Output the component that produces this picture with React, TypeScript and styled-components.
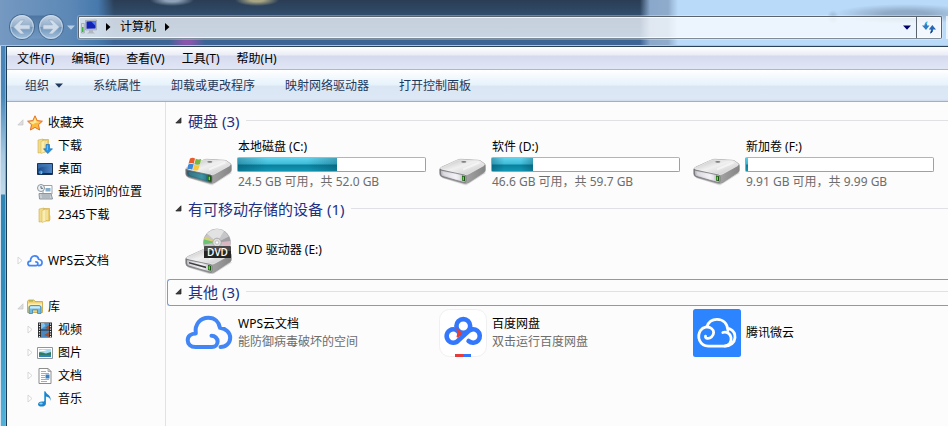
import React from "react";
import styled, { createGlobalStyle, css } from "styled-components";

const GlobalStyle = createGlobalStyle`
  * { box-sizing: border-box; }
  html, body { margin: 0; padding: 0; }
  body, button {
    font-family: "Noto Sans", "Noto Sans CJK SC", sans-serif;
    font-size: 12px;
    line-height: 18px;
    color: #000;
  }
  button { background: none; border: 0; padding: 0; margin: 0; white-space: nowrap; }
  svg { display: block; flex: none; }
  ul { list-style: none; margin: 0; padding: 0; }
`;

const Shell = styled.div`
  display: flex;
  flex-direction: column;
  min-height: 100vh;
  overflow: hidden;
`;

const GlassHeader = styled.header`
  display: flex;
  align-items: center;
  gap: 3px;
  height: 46px;
  padding: 9px 0 0 9px;
  border-bottom: 1px solid #a9c6e0;
  background:
    radial-gradient(ellipse 18px 8px at 187px 42px, #8a55ad 20%, transparent),
    radial-gradient(ellipse 22px 6px at 172px 0, #8fa3b8 30%, transparent),
    radial-gradient(ellipse 22px 6px at 257px 0, #a8a583 30%, transparent),
    radial-gradient(ellipse 6px 7px at 833px 17px, #9ab6d3 10%, transparent),
    radial-gradient(ellipse 72px 10px at 906px 14px, #8faac6 30%, transparent),
    linear-gradient(90deg, transparent 640px, #8aa8cb 650px, #8fabcc 668px, #badafa 678px),
    linear-gradient(90deg, #7599c1, #5c88b6 70px, #4679ad 98px, transparent 114px),
    linear-gradient(#2a3d55, #304a67 12px, #30527d 18px, #386497 38px, #3e6595);
`;

const NavPair = styled.div`
  display: flex;
  gap: 3px;
  border-radius: 13px;
  background: linear-gradient(transparent 1px, rgba(60, 100, 145, 0.6) 2px, rgba(120, 160, 200, 0.5) 24px, transparent 25px);
`;

const RoundButton = styled.button`
  width: 26px;
  height: 26px;
`;

const RecentButton = styled.button`
  width: 8px;
  display: flex;
`;

const AddressBar = styled.div`
  flex: 1;
  display: flex;
  height: 23px;
  border: 1px solid #59646f;
  border-bottom-color: #7e8b98;
  border-radius: 2px;
  background: rgba(255, 255, 255, 0.73);
  box-shadow: inset 0 0 0 1px rgba(255, 255, 255, 0.75), 0 0 0 1px rgba(255, 255, 255, 0.3);
`;

const Crumbs = styled.nav`
  flex: 1;
  display: flex;
  align-items: center;
  padding: 0 5px 0 2px;
  gap: 9px;
`;

const Spacer = styled.span`
  flex: 1;
`;

const RefreshButton = styled.button`
  width: 25px;
  display: flex;
  align-items: center;
  justify-content: center;
  border-left: 1px solid #59646f;
  background: rgba(255, 255, 255, 0.3);
`;

const SearchEdge = styled.div`
  width: 2px;
  height: 23px;
  margin-left: 1px;
  background: rgba(255, 255, 255, 0.7);
`;

const Frame = styled.div`
  flex: 1;
  display: flex;
`;

const GlassEdge = styled.div`
  width: 6px;
  border-left: 1px solid #d3e3f1;
  border-right: 1px solid #6db6d8;
  background: linear-gradient(#4a83b8, #4888bb 50px, #a8cbe2 110px, #c0daea 148px, #2e86b5 149px, #2f8dbd 240px, #52b3da);
`;

const Content = styled.div`
  flex: 1;
  min-width: 0;
  display: flex;
  flex-direction: column;
  border-left: 1px solid #1d3c58;
  border-top: 1px solid #2a4057;
  background: #fcfcfc;
`;

const MenuBar = styled.nav`
  display: flex;
  gap: 17px;
  height: 23px;
  padding: 1px 10px 0;
  border-bottom: 1px solid #b1b6cc;
  background: linear-gradient(#fff, #e9ecf5 8px, #d5daee 9px, #e1e6f6);
`;

const Toolbar = styled.div`
  display: flex;
  align-items: center;
  gap: 30px;
  height: 32px;
  padding: 0 18px;
  border-bottom: 1px solid #a0afc3;
  background: linear-gradient(#fff, #e6f2fb 15px, #dbe6f4 16px, #dde8f6 29px, #c9d9ec);
`;

const ToolButton = styled.button`
  display: flex;
  align-items: center;
  gap: 6px;
  color: #1e395b;
`;

const Panes = styled.div`
  flex: 1;
  display: flex;
`;

const Sidebar = styled.aside`
  flex: none;
  width: 159px;
  padding-top: 9px;
  border-right: 1px solid #d6e5f5;
`;

const TreeSection = styled.ul`
  margin-bottom: 23px;
`;

const TreeItem = styled.button<{ $nested?: boolean }>`
  display: flex;
  align-items: center;
  width: 100%;
  height: 23px;
  padding-left: ${(p) => (p.$nested ? 20 : 10)}px;
`;

const Twisty = styled.span`
  width: 10px;
`;

const TreeLabel = styled.span`
  margin-left: 5px;
`;

const Main = styled.main`
  flex: 1;
  min-width: 0;
  padding: 6px 0 0 1px;
`;

const GroupTitle = styled.h2<{ $focused?: boolean }>`
  display: flex;
  align-items: center;
  height: 27px;
  margin: 0;
  padding-bottom: 2px;
  font-weight: 400;
  border: 1px solid transparent;
  border-right: 0;
  border-radius: 3px 0 0 3px;
  ${(p) => p.$focused && css`border-color: #7d9dc8;`}
  &::after {
    content: "";
    flex: 1;
    height: 1px;
    margin-left: 7px;
    background: #e0e1e4;
  }
`;

const GroupToggle = styled.button`
  display: flex;
  align-items: center;
  gap: 6px;
  padding-left: 7px;
  color: #1e3287;
  font-size: 15px;
  line-height: 22px;
`;

const Tiles = styled.ul`
  display: grid;
  grid-template-columns: repeat(auto-fill, 254px);
  padding: 3px 0 5px 18px;
`;

const Tile = styled.li`
  display: flex;
  align-items: center;
  gap: 5px;
  min-height: 48px;
`;

const TileText = styled.div`
  width: 188px;
`;

const TileName = styled.div<{ $tight?: boolean }>`
  line-height: ${(p) => (p.$tight ? 17 : 18)}px;
`;

const TileNote = styled.div`
  color: #6d6d6d;
`;

const Meter = styled.div`
  height: 15px;
  margin: 2px 0 1px -1px;
  padding: 0;
  border: 1px solid #a0a0a0;
  border-top-color: #b4b4b4;
  border-radius: 2px;
  background: #fff;
`;

const MeterFill = styled.div`
  height: 13px;
  background:
    linear-gradient(90deg, rgba(0, 50, 70, 0.3), transparent 30%, transparent 70%, rgba(0, 50, 70, 0.3)),
    linear-gradient(#63d3ec, #3cbcd9 6px, #0b7f9c 7px, #1198b4);
`;

type Part = { x?: number };

const RoundArrow = ({ flip }: { flip?: boolean }) => (
  <svg width="26" height="26" viewBox="0 0 26 26">
    <defs>
      <linearGradient id={flip ? "ra2" : "ra1"} x1="0" y1="0" x2="0" y2="1">
        <stop offset="0" stopColor="#c3d3e4" />
        <stop offset=".48" stopColor="#93aeca" />
        <stop offset=".52" stopColor="#6f94ba" />
        <stop offset="1" stopColor="#a5c3df" />
      </linearGradient>
    </defs>
    <circle cx="13" cy="13" r="12.5" fill="none" stroke="#45688d" />
    <circle cx="13" cy="13" r="12" fill={`url(#${flip ? "ra2" : "ra1"})`} />
    <circle cx="13" cy="13" r="11.300" fill="none" stroke="#d4e1ee" strokeOpacity=".7" />
    <path
      transform={flip ? "translate(26 0) scale(-1 1)" : undefined}
      d="M4.500 13 11.500 6h4L11.500 10.800H21v4.400h-9.500l4 4.800h-4z"
      fill="#d0dce9"
      stroke="#8ba6c3"
      strokeWidth=".6"
    />
  </svg>
);

const Computer = () => (
  <svg width="16" height="16" viewBox="0 0 16 16">
    <path d="M.5 4.500h2.800v9.500H.5z" fill="#d4d8dc" stroke="#8c949c" strokeWidth=".6" />
    <path d="M1 8h1.500v5H1z" fill="#3db53b" />
    <path d="M4.500 1.500 15.500 1v9.800l-11 .2z" fill="#c9cdd6" stroke="#8d93a0" strokeWidth=".6" />
    <path d="M5.500 2.400 14.600 2v7.500l-9.100.3z" fill="#1021b8" />
    <path d="m10 2.200 4.600-.2v5z" fill="#597af0" />
    <path d="M8 11h4v2l2 1.500H6L8 13z" fill="#b2b6bd" />
  </svg>
);

const CrumbArrow = () => (
  <svg width="5" height="8" viewBox="0 0 5 8"><path d="M0 0 4.500 4 0 8z" fill="#000" /></svg>
);

const DownArrow = ({ color }: { color: string }) => (
  <svg width="8" height="5" viewBox="0 0 8 5"><path d="M0 .5h8L4 4.700z" fill={color} /></svg>
);

const RefreshIcon = () => (
  <svg width="14" height="13" viewBox="0 0 14 13">
    <path d="M5.500.5C3.500 1 2.500 2.500 2.500 4.500H0L4 9l3.500-4.500H5.200C5 2.800 5 1.500 5.500.5z" fill="#2f7cc4" />
    <path d="M5.500.5C4 1 3.400 2 3.200 3.500L5 3c0-1 .1-1.700.5-2.500z" fill="#3cc0e0" />
    <path d="M8 12.500c2-.5 3.200-2 3.200-4H14L10.300 4 6.800 8.500h2C9 10.200 8.700 11.500 8 12.500z" fill="#2a67b3" />
    <path d="M8 12.500c1.500-.4 2.200-1.300 2.500-2.500H8.900c-.2 1-.5 1.900-.9 2.500z" fill="#173b78" />
  </svg>
);

const OpenMark = ({ pale }: { pale?: boolean }) => (
  <svg width="7" height="7" viewBox="0 0 7 7">
    <path d="M6 .8V6H.8z" fill={pale ? "#dedede" : "#3f3f3f"} stroke={pale ? "#c6c6c6" : "#1c1c1c"} strokeWidth=".7" />
  </svg>
);

const ClosedMark = () => (
  <svg width="7" height="9" viewBox="0 0 7 9">
    <path d="M1 1v7l4-3.500z" fill="#fff" stroke="#d4d4d4" strokeWidth=".9" />
  </svg>
);

const Star = () => (
  <svg width="16" height="16" viewBox="0 0 16 16">
    <path d="m8 .8 2.200 4.800 5.200.6-3.900 3.500 1.100 5.300L8 12.400 3.400 15l1.100-5.300L.6 6.200l5.200-.6z" fill="#fdb93a" stroke="#e2702a" strokeLinejoin="round" />
    <path d="M8 2.800 6.500 6.500l-4 .5L6 9.500 8 8l5-1-3.500-.6z" fill="#ffe999" />
  </svg>
);

const FolderBody = ({ x = 2 }: Part) => (
  <g transform={`translate(${x} 0)`}>
    <path d="M0 2 5 1v13.500L0 15z" fill="#f2dc8a" stroke="#cdac50" strokeWidth=".6" />
    <path d="M5 1.500h5.500V14H5z" fill="#e9cb69" stroke="#c9a648" strokeWidth=".6" />
    <path d="m3 3.500 4-1.500v12l-4 1.500z" fill="#faedb0" stroke="#d3b456" strokeWidth=".5" />
    <path d="M7.500 3h1v10h-1z" fill="#fff6cf" />
    <path d="M10.500 8.500h.8V13h-.8z" fill="#d9b65a" />
  </g>
);

const Folder = () => <svg width="16" height="16" viewBox="0 0 16 16"><FolderBody /></svg>;

const Downloads = () => (
  <svg width="16" height="16" viewBox="0 0 16 16">
    <FolderBody x={1} />
    <path d="M9 6.500h3.500v4.300h3L10.800 15.600 6.500 10.800H9z" fill="#2591e3" stroke="#1767b0" strokeWidth=".6" />
    <path d="M9.800 7.200h.9v5h-.9z" fill="#83cbf8" />
  </svg>
);

const Desktop = () => (
  <svg width="16" height="16" viewBox="0 0 16 16">
    <defs><linearGradient id="desk"><stop stopColor="#174581" /><stop offset="1" stopColor="#5088cb" /></linearGradient></defs>
    <path d="M.5 2.500h15v11H.5z" fill="url(#desk)" stroke="#1b3156" />
    <path d="M1 2.800 15 3v4C11 5 6 5 1 8z" fill="#477dba" fillOpacity=".6" />
    <path d="M1 12h14v1.300H1z" fill="#172d50" />
    <circle cx="3.800" cy="11.300" r="1.900" fill="#3295dd" />
    <path d="M2.800 10.300h1v1h-1z" fill="#ee6d37" /><path d="M4 11.400h1v1H4z" fill="#ffd744" /><path d="M4 10.200h1v1H4z" fill="#7fcc46" />
  </svg>
);

const Recent = () => (
  <svg width="16" height="16" viewBox="0 0 16 16">
    <path d="M6 1.500h9v8.500H6z" fill="#fff" stroke="#9ba1a7" />
    <path d="M8.500 4h5v3.500h-5z" fill="#85aeca" />
    <path d="M2 9.500h12l1.500 5.500H2.500z" fill="#c9d0d6" stroke="#8d969e" />
    <path d="M4.500 11h9M5 13h8" stroke="#9aa4ac" />
    <circle cx="4" cy="4" r="3.500" fill="#edf2f5" stroke="#8c969e" />
    <path d="M4 2v2.300h2" fill="none" stroke="#4d5963" strokeWidth=".9" />
  </svg>
);

const WPS_PATH =
  "M26.500 26.700C30 26.700 32.600 29.500 32.600 32.500C32.600 35.700 30 38 27 38H10.500C5.500 38 2.700 34.800 2.700 31.300C2.700 27 6 24.500 10.800 24.400C9.500 15 15.500 8.800 23.300 8.800C30 8.800 34 13 35 18.800C41 19.500 45.200 23.500 45.200 28.800C45.200 34 41 38 35.500 38";

const WpsCloud = ({ size = 48, stroke = 4 }: { size?: number; stroke?: number }) => (
  <svg width={size} height={size} viewBox="0 0 48 48">
    <path d={WPS_PATH} fill="none" stroke="#4285f4" strokeWidth={stroke} strokeLinecap="round" strokeLinejoin="round" />
  </svg>
);

const Library = () => (
  <svg width="16" height="16" viewBox="0 0 16 16">
    <path d="M.5 2.500 1.500 1H7l1 1.500h7.500v11H.5z" fill="#f0d278" stroke="#c7a242" strokeWidth=".8" />
    <path d="M1 4.500h14v3H1z" fill="#fcf0b5" />
    <path d="M2 1.600h4v.8H2z" fill="#69ae49" />
    <path d="M2 14.500V8.500Q2 6.500 4 6.500h8q2 0 2 2v6h-3.500v-3.700h-5v3.700z" fill="#71bae0" stroke="#3b88b8" strokeWidth=".8" />
    <path d="M3 8q0-.8 1-.8h8q1 0 1 .8v1.500H3z" fill="#cbeaf7" />
  </svg>
);

const Video = () => (
  <svg width="16" height="16" viewBox="0 0 16 16">
    <path d="M1 .5h14v15H1z" fill="#27292c" />
    <path d="M4 1h8v6.500H4z" fill="#4a91cc" /><path d="M4 8.500h8V15H4z" fill="#4788c2" />
    <path d="M4 1h3l1.500 3L7 5 4 7z" fill="#7fc3ed" /><path d="m12 3-4 3 4 1.500zM12 10l-5 3 5 2z" fill="#9e5230" />
    <path d="M2.500 1.500v14M13.500 1.500v14" stroke="#f0f0f0" strokeWidth="1.200" strokeDasharray="1.300 1.200" />
  </svg>
);

const Picture = () => (
  <svg width="16" height="16" viewBox="0 0 16 16">
    <path d="M.5 2.500h15v11H.5z" fill="#fff" stroke="#8f979d" />
    <path d="M2 4h12v8H2z" fill="#a7dcf4" />
    <path d="M2 7.500c3-1 5 .8 7 1l5-1.500v3H2z" fill="#2f7b53" />
    <path d="M2 9.800h12V12H2z" fill="#2c83bb" /><path d="M2 5.500c3-1 6-1 8 0-3 .6-5 .6-8 1z" fill="#fff" />
  </svg>
);

const Doc = () => (
  <svg width="16" height="16" viewBox="0 0 16 16">
    <path d="M2 .5h9l3 3v12H2z" fill="#fff" stroke="#8d8d8d" />
    <path d="M11 .5v3h3z" fill="#dedede" stroke="#8d8d8d" strokeWidth=".7" />
    <path d="M4 3.500h5M4 5.500h8M4 7.500h4M4 9.500h4M4 11.500h8M4 13.500h6" stroke="#8796c5" strokeWidth=".8" />
    <path d="M8.500 6.500h4v4h-4z" fill="#3e7fc0" />
  </svg>
);

const Music = () => (
  <svg width="16" height="16" viewBox="0 0 16 16">
    <path d="M7 .5h1.600c.5 3 5.800 3.300 5 9.500-.5-2.800-2-4-4.700-4.400v7.100c0 1.700-2 2.900-4.300 2.900C2.500 15.600 1 14.700 1 13.200c0-1.900 2.300-3.200 6-2.600z" fill="#1d83cb" />
    <ellipse cx="4" cy="12.500" rx="1.800" ry="1" fill="#85d0f7" /><path d="M7.500 1v9" stroke="#69bbec" strokeWidth=".7" />
  </svg>
);

const WinFlag = () => (
  <g transform="translate(2.500 16.500)">
    <path d="M2.500 1c2-1.200 3.500-.9 5 0L6.300 6.200C4.800 5.300 3 5.300 1 6.200z" fill="#e65c2c" />
    <path d="M8.200 1.300c1.800.9 3.600.9 5.500.2l-1.400 5.200c-2 .7-3.600.6-5.300-.3z" fill="#78b83c" />
    <path d="M.8 7c2-1 3.500-.9 5.200 0l-1.300 5.200c-1.700-.8-3.200-.8-5.200.2z" fill="#3d87d5" />
    <path d="M6.700 7.300c1.800.9 3.500 1 5.400.3l-1.400 5c-2 .8-3.600.6-5.300-.2z" fill="#fac83a" />
  </g>
);

const DriveShape = ({ id, teal, slot }: { id: string; teal?: boolean; slot?: boolean }) => (
  <g>
    <defs>
      <linearGradient id={`${id}t`} x1="0" y1="0" x2="1" y2="1">
        <stop offset="0" stopColor="#b9b9b9" /><stop offset=".45" stopColor="#f0f0f0" /><stop offset="1" stopColor="#c4c4c4" />
      </linearGradient>
      <linearGradient id={`${id}f`}>
        <stop offset="0" stopColor={teal ? "#285d72" : "#c0c0c8"} /><stop offset=".6" stopColor={teal ? "#2f8b9c" : "#eeeef4"} /><stop offset="1" stopColor={teal ? "#1a5060" : "#b3b3bb"} />
      </linearGradient>
      <linearGradient id={`${id}s`}>
        <stop offset="0" stopColor="#6e6e6e" /><stop offset=".25" stopColor="#b9b9b9" /><stop offset="1" stopColor="#858585" />
      </linearGradient>
    </defs>
    <path d="M3 37 27 44.500 47 32 44 30z" fill="#000" fillOpacity=".13" />
    <path d="M.7 28.500Q.8 27 3 26L18.500 19Q20 18.300 22 18.300L39 19.300Q41 19.400 42 20.200L45.500 22.800Q46.300 23.500 46.300 25V29Q46.300 30.500 45 31.500L30 41.300Q27.500 43 24.500 42.200L3.500 36.300Q1 35.500.8 33z" fill={`url(#${id}s)`} stroke="#8c8c8c" strokeWidth=".7" />
    <path d="M2 26.800 19 19Q20 18.600 22 18.700L39 19.600Q41 19.800 42 20.600L45 23Q46 24 44.500 24.800L29.500 33Q27.500 34 25 33.500L3 28.500Q.8 27.800 2 26.800z" fill={`url(#${id}t)`} stroke="#f5f5f5" strokeWidth=".6" />
    <path d="M1.500 29 25.500 34Q27 34.400 27 36V40Q27 42 25 41.500L4 35.600Q1.800 35 1.700 33z" fill={`url(#${id}f)`} stroke="#6d6d72" strokeWidth=".7" />
    <path d="M4 30.800 21 34.600v4.300L5.500 34.600Q4.200 34 4 32.500z" fill="#fff" fillOpacity={teal ? ".08" : ".3"} />
    {slot && <path d="M4 31.500 21 36v1.800L4 33z" fill="#3e3e3e" />}
    <path d="M23 34.600 26 35.200V40.300L23 39.500z" fill="#1c5114" />
    <path d="M23.600 35.400 25 35.700V39.300L23.600 38.900z" fill="#53e62b" />
    <ellipse cx="24.800" cy="20.800" rx="2.600" ry=".9" fill="#7b7b7b" />
    <path d="M24 28.500 40.500 21.500" stroke="#fff" strokeWidth="2" strokeOpacity=".5" />
  </g>
);

const Drive = ({ id, system }: { id: string; system?: boolean }) => (
  <svg width="48" height="48" viewBox="0 0 48 48">
    <DriveShape id={id} teal={system} />
    {system && <WinFlag />}
  </svg>
);

const DvdLabel = styled.text`
  font: 600 10px "Open Sans", "Noto Sans", sans-serif;
  fill: #fff;
`;

const DvdDrive = () => (
  <svg width="48" height="48" viewBox="0 0 48 48">
    <g transform="translate(0 4.500)"><DriveShape id="dvd" slot /></g>
    <circle cx="32" cy="16.500" r="13.500" fill="#c6c6c8" stroke="#a4a4a6" strokeWidth=".7" />
    <path d="M32 16.500 22 7.500A13.500 13.500 0 0 1 39 5z" fill="#e2e2e2" />
    <path d="M32 16.500 19 13.500a13.500 13.500 0 0 1 1.500-3z" fill="#d9d06c" />
    <path d="M32 16.500 18.700 18.500a13.500 13.500 0 0 1 .3-5z" fill="#6cc472" />
    <path d="m32 16.500 13.300-1.500a13.500 13.500 0 0 1-.5 5.500z" fill="#ddb6c4" />
    <path d="m32 16.500 12-6a13.500 13.500 0 0 1 1.300 4.500z" fill="#9f9fa4" />
    <circle cx="32" cy="16.500" r="4.300" fill="#dcdcdc" stroke="#a0a0a0" strokeWidth=".8" />
    <circle cx="32" cy="16.500" r="1.700" fill="#fff" stroke="#999" strokeWidth=".5" />
    <path d="M19 21.500q0-1.500 1.500-1.500h24q1.500 0 1.500 1.500V32H19z" fill="#242424" />
    <path d="M19 21.500q0-1.500 1.500-1.500h24q1.500 0 1.500 1.500V25H19z" fill="#4a4a4a" />
    <DvdLabel x="32.500" y="29.500" textAnchor="middle">DVD</DvdLabel>
  </svg>
);

const BaiduDisk = () => (
  <svg width="48" height="48" viewBox="0 0 48 48">
    <rect x=".5" y=".5" width="47" height="47" rx="10" fill="#fff" stroke="#f0f0f0" />
    <g fill="none" stroke="#3277fc" strokeWidth="4.600">
      <circle cx="24.300" cy="17" r="6.900" />
      <path d="M20.500 24.300A6.700 6.700 0 1 0 19.500 31.300L28.800 22.900A6.700 6.700 0 1 1 29.600 32" strokeLinecap="round" strokeLinejoin="round" />
    </g>
    <path d="m17.500 18.500 4 3.500 2.200 2.300-4.700 4.500-1.500-.8q1.700-4 0-7.500z" fill="#e0423d" />
    <path d="M16 45h8v3h-8z" fill="#e43d3c" /><path d="M24 45h8v3h-8z" fill="#3277fc" />
  </svg>
);

const Weiyun = () => (
  <svg width="48" height="48" viewBox="0 0 48 48">
    <rect width="48" height="48" rx="2.500" fill="#2c85ff" />
    <g fill="none" stroke="#fff" strokeWidth="2.800" strokeLinecap="round">
      <path d="M12.500 27.200C12 29.700 16 30.200 18.500 28C21.500 25.300 21.200 21.500 18.500 19.500C15 16.800 10 18 7.500 21.500C3.500 27.500 6.500 37 15.500 37.200H31C36.500 37 38.800 32.800 38 28.500C37.300 24.500 33.500 22.300 29.800 23.500" />
      <path d="M14 17.500C15.500 13 19.500 10.300 24 10.300C30.500 10.300 34.500 15 35 21.500" />
      <path d="M36.500 19.800C40.200 21.500 42.300 24.800 42 28.700C41.700 33.500 37.500 37.200 32 37.200" />
    </g>
  </svg>
);

type Node = { label: string; icon: React.ReactNode; open?: boolean; closed?: boolean; children?: Node[] };

const tree: Node[] = [
  {
    label: "收藏夹", icon: <Star />, open: true,
    children: [
      { label: "下载", icon: <Downloads /> },
      { label: "桌面", icon: <Desktop /> },
      { label: "最近访问的位置", icon: <Recent /> },
      { label: "2345下载", icon: <Folder /> },
    ],
  },
  { label: "WPS云文档", icon: <WpsCloud size={16} stroke={5} />, closed: true },
  {
    label: "库", icon: <Library />, open: true,
    children: [
      { label: "视频", icon: <Video />, closed: true },
      { label: "图片", icon: <Picture />, closed: true },
      { label: "文档", icon: <Doc />, closed: true },
      { label: "音乐", icon: <Music />, closed: true },
    ],
  },
];

const TreeRow = ({ node, nested }: { node: Node; nested?: boolean }) => (
  <li>
    <TreeItem $nested={nested}>
      <Twisty>{node.open ? <OpenMark pale /> : node.closed ? <ClosedMark /> : null}</Twisty>
      {node.icon}
      <TreeLabel>{node.label}</TreeLabel>
    </TreeItem>
  </li>
);

const disks = [
  { name: "本地磁盘 (C:)", note: "24.5 GB 可用，共 52.0 GB", used: 53, system: true },
  { name: "软件 (D:)", note: "46.6 GB 可用，共 59.7 GB", used: 22 },
  { name: "新加卷 (F:)", note: "9.91 GB 可用，共 9.99 GB", used: 1 },
];

const others = [
  { name: "WPS云文档", note: "能防御病毒破坏的空间", icon: <WpsCloud /> },
  { name: "百度网盘", note: "双击运行百度网盘", icon: <BaiduDisk /> },
  { name: "腾讯微云", icon: <Weiyun /> },
];

const Group = ({ title, focused, children }: { title: string; focused?: boolean; children: React.ReactNode }) => (
  <section>
    <GroupTitle $focused={focused}>
      <GroupToggle aria-expanded="true"><OpenMark />{title}</GroupToggle>
    </GroupTitle>
    <Tiles>{children}</Tiles>
  </section>
);

export default function App() {
  return (
    <Shell>
      <GlobalStyle />
      <GlassHeader>
        <NavPair>
          <RoundButton aria-label="后退"><RoundArrow /></RoundButton>
          <RoundButton aria-label="前进"><RoundArrow flip /></RoundButton>
        </NavPair>
        <RecentButton aria-label="最近的页面"><DownArrow color="#b5cde4" /></RecentButton>
        <AddressBar>
          <Crumbs>
            <Computer />
            <CrumbArrow />
            <button>计算机</button>
            <CrumbArrow />
            <Spacer />
            <button aria-label="以前的位置"><DownArrow color="#00006b" /></button>
          </Crumbs>
          <RefreshButton aria-label="刷新"><RefreshIcon /></RefreshButton>
        </AddressBar>
        <SearchEdge />
      </GlassHeader>
      <Frame>
        <GlassEdge />
        <Content>
          <MenuBar>
            {["文件(F)", "编辑(E)", "查看(V)", "工具(T)", "帮助(H)"].map((m) => <button key={m}>{m}</button>)}
          </MenuBar>
          <Toolbar>
            <ToolButton>组织<DownArrow color="#1e395b" /></ToolButton>
            {["系统属性", "卸载或更改程序", "映射网络驱动器", "打开控制面板"].map((t) => <ToolButton key={t}>{t}</ToolButton>)}
          </Toolbar>
          <Panes>
            <Sidebar>
              {tree.map((n) => (
                <TreeSection key={n.label}>
                  <TreeRow node={n} />
                  {n.children?.map((c) => <TreeRow key={c.label} node={c} nested />)}
                </TreeSection>
              ))}
            </Sidebar>
            <Main>
              <Group title="硬盘 (3)">
                {disks.map((d, i) => (
                  <Tile key={d.name}>
                    <Drive id={`d${i}`} system={d.system} />
                    <TileText>
                      <TileName $tight>{d.name}</TileName>
                      <Meter role="meter" aria-label={d.name} aria-valuemin={0} aria-valuemax={100} aria-valuenow={d.used}>
                        <MeterFill style={{ width: `${d.used}%` }} />
                      </Meter>
                      <TileNote>{d.note}</TileNote>
                    </TileText>
                  </Tile>
                ))}
              </Group>
              <Group title="有可移动存储的设备 (1)">
                <Tile>
                  <DvdDrive />
                  <TileText><TileName>DVD 驱动器 (E:)</TileName></TileText>
                </Tile>
              </Group>
              <Group title="其他 (3)" focused>
                {others.map((o) => (
                  <Tile key={o.name}>
                    {o.icon}
                    <TileText>
                      <TileName>{o.name}</TileName>
                      {o.note && <TileNote>{o.note}</TileNote>}
                    </TileText>
                  </Tile>
                ))}
              </Group>
            </Main>
          </Panes>
        </Content>
      </Frame>
    </Shell>
  );
}
